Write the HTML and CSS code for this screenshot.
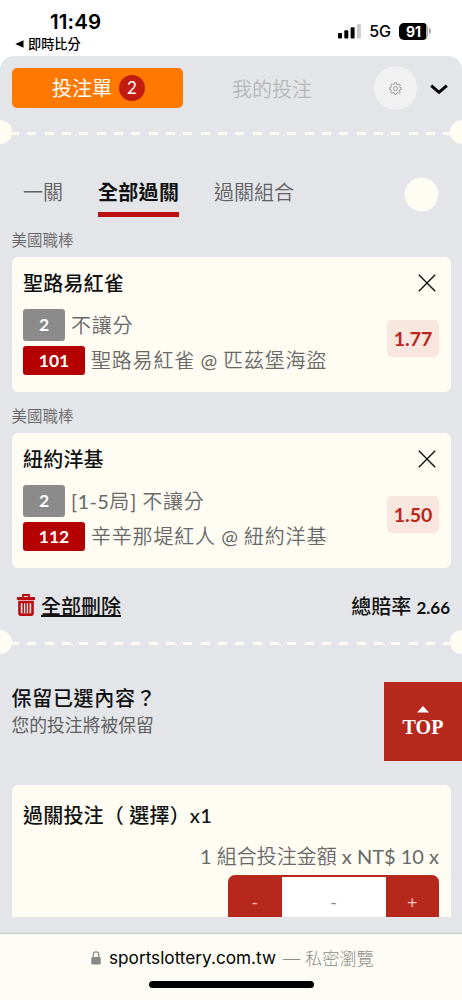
FILE: index.html
```html
<!DOCTYPE html>
<html lang="zh-Hant">
<head>
<meta charset="utf-8">
<meta name="viewport" content="width=device-width, initial-scale=1">
<title>投注單</title>
<link rel="stylesheet" href="styles.css">
</head>
<body>
<div class="phone">
  <header class="status">
    <div class="status-left">
      <div class="clock">11:49</div>
      <div class="back"><svg width="9" height="8" viewBox="0 0 9 8"><path d="M0.3 4 8.5 0.3V7.7Z" fill="#000"/></svg><span>即時比分</span></div>
    </div>
    <div class="status-right">
      <svg class="signal" width="23" height="15" viewBox="0 0 23 15"><rect x="0" y="9" width="4" height="5.5" rx="1"/><rect x="6.3" y="6.3" width="4" height="8.2" rx="1"/><rect x="12.6" y="3.3" width="4" height="11.2" rx="1"/><rect x="18.9" y="0" width="4" height="14.5" rx="1" fill="#ccc"/></svg>
      <span class="network">5G</span>
      <span class="battery">91</span><i class="battery-tip"></i>
    </div>
  </header>

  <main class="sheet">
    <nav class="topbar">
      <button class="slip">投注單<span class="count">2</span></button>
      <span class="mine">我的投注</span>
      <span class="gear"><svg width="13" height="13" viewBox="0 0 24 24" fill="none" stroke="#999" stroke-width="1.8" stroke-linejoin="round"><path d="M9.5 4.5 10 1.5h4l.5 3 2 .8L19 3.500 21 6l-1.800 2.500.8 1.500 2.500.5v3.500l-2.800.5-.8 2L20.500 19 18 21.200l-2.500-1.700-1.500.7-.5 2.500h-3.500l-.5-2.700-2-.8L5 21 2.800 18.500l1.700-2.500-.8-1.800-2.500-.5v-3.500l2.800-.5.8-2L3 5.200 5.500 3l2.200 2.200Z"/><circle cx="12" cy="12" r="3.700"/></svg></span>
      <svg class="chevron" width="18" height="11" viewBox="0 0 18 11"><path d="M1.200 1.600 9 8.300 16.800 1.600" fill="none" stroke="#000" stroke-width="3"/></svg>
    </nav>

    <div class="perforation"><i class="notch"></i><i class="dashes"></i><i class="notch"></i></div>

    <nav class="tabs">
      <span class="tab">一關</span>
      <span class="tab active">全部過關</span>
      <span class="tab">過關組合</span>
      <i class="info"></i>
    </nav>

    <h3 class="league">美國職棒</h3>
    <section class="card">
      <div class="card-head"><h2>聖路易紅雀</h2><svg class="close" width="18" height="18" viewBox="0 0 18 18"><path d="M.8.8 17.200 17.200M17.200.8.8 17.200" stroke="#111" stroke-width="1.400"/></svg></div>
      <div class="card-body">
        <div class="lines">
          <div class="line"><span class="tag grey">2</span><span class="detail">不讓分</span></div>
          <div class="line"><span class="tag red">101</span><span class="detail">聖路易紅雀<span class="latin"> @ </span>匹茲堡海盜</span></div>
        </div>
        <span class="odds">1.77</span>
      </div>
    </section>

    <h3 class="league">美國職棒</h3>
    <section class="card">
      <div class="card-head"><h2>紐約洋基</h2><svg class="close" width="18" height="18" viewBox="0 0 18 18"><path d="M.8.8 17.200 17.200M17.200.8.8 17.200" stroke="#111" stroke-width="1.400"/></svg></div>
      <div class="card-body">
        <div class="lines">
          <div class="line"><span class="tag grey">2</span><span class="detail"><span class="latin">[1-5</span>局<span class="latin">] </span>不讓分</span></div>
          <div class="line"><span class="tag red">112</span><span class="detail">辛辛那堤紅人<span class="latin"> @ </span>紐約洋基</span></div>
        </div>
        <span class="odds">1.50</span>
      </div>
    </section>

    <div class="summary">
      <svg width="18" height="22" viewBox="0 0 18 22" fill="none" stroke="#ba0b0e"><path d="M0 4.500H18" stroke-width="3"/><path d="M6 4V1H12V4" stroke-width="1.800"/><path d="M2.500 8V19.200Q2.500 20.600 3.900 20.600H14.100Q15.500 20.600 15.500 19.200V8Z" stroke-width="2.600"/><path d="M6.200 9V19M9 9V19M11.800 9V19" stroke-width="1.500"/></svg>
      <a class="clear">全部刪除</a>
      <span class="total">總賠率 <span class="total-value">2.66</span></span>
    </div>

    <div class="perforation"><i class="notch"></i><i class="dashes"></i><i class="notch"></i></div>

    <div class="keep">
      <h2>保留已選內容？</h2>
      <p>您的投注將被保留</p>
    </div>

    <section class="card stake">
      <h2>過關投注（ 選擇）x1</h2>
      <p class="amount"><span class="latin">1 </span>組合投注金額<span class="latin"> x NT$ 10 x</span></p>
      <div class="stepper"><span>-</span><span class="value">-</span><span>+</span></div>
    </section>
    <a class="top"><svg width="12" height="7" viewBox="0 0 12 7"><path d="M6 0 12 6.500H0Z" fill="#fff"/></svg>TOP</a>
  </main>

  <footer class="browser">
    <div class="address">
      <svg width="10" height="14" viewBox="0 0 10 14"><path d="M2.200 7V3.800a2.700 2.900 0 0 1 5.600 0V7" fill="none" stroke="#888" stroke-width="1.200"/><rect x=".3" y="6" width="9.400" height="7.600" rx="1.400" fill="#888"/></svg>
      <span class="host">sportslottery.com.tw</span>
      <span class="mode">— 私密瀏覽</span>
    </div>
    <i class="home"></i>
  </footer>
</div>
</body>
</html>
```

FILE: styles.css
```css
* { box-sizing: border-box; margin: 0; padding: 0; }
body { background: #fff; font-family: Lato, "Noto Sans CJK TC", sans-serif; }
h2, h3 { font-weight: 500; }
svg, i { display: block; flex: none; }
.phone { width: 462px; height: 1000px; overflow: hidden; display: flex; flex-direction: column; }

.status { height: 56px; flex: none; display: flex; justify-content: space-between; font-family: Inter, "Noto Sans CJK TC", sans-serif; }
.status-left { padding: 9px 0 0 15px; }
.clock { padding-left: 35px; font-size: 20.500px; line-height: 25px; font-weight: 600; letter-spacing: .1px; }
.back { display: flex; align-items: center; gap: 4px; font-size: 13.200px; line-height: 20px; font-weight: 500; }
.status-right { display: flex; align-items: center; height: 22px; margin: 20px 33px 0 0; }
.network { font-size: 16px; font-weight: 500; margin: 0 8px 0 8px; }
.battery { width: 29px; height: 17px; border-radius: 5px; background: linear-gradient(90deg, #000 92%, #aaa 92%); color: #fff; font-size: 14px; line-height: 17px; font-weight: 700; text-align: center; }
.battery-tip { width: 2px; height: 6px; margin-left: 1px; margin-right: -2px; border-radius: 0 2px 2px 0; background: #aaa; }

.sheet { position: relative; height: 878px; flex: none; overflow: hidden; background: #e4e5e8; border-radius: 14px 14px 0 0; border-bottom: 1px solid #c8c9ca; display: flex; flex-direction: column; }
.sheet > * { flex: none; }
.topbar { display: flex; align-items: center; height: 44px; margin-top: 10px; padding: 0 13.500px 0 11.500px; }
.slip { width: 171px; height: 40px; border: 0; border-radius: 5px; background: #ff7900; color: #fff; font: 400 20px/40px Lato, "Noto Sans CJK TC", sans-serif; display: flex; align-items: center; justify-content: center; gap: 7px; padding-left: 3px; }
.count { width: 26px; height: 26px; border-radius: 50%; background: #c21b12; font-size: 17px; line-height: 26px; text-align: center; }
.mine { margin-left: 49.500px; width: 141.500px; font-size: 20px; font-weight: 350; color: #b5b6b8; }
.gear { width: 43.500px; height: 43.500px; border-radius: 50%; background: #f1f1f1; display: flex; align-items: center; justify-content: center; }
.chevron { margin: 2px 0 0 13px; }

.perforation { height: 24px; display: flex; align-items: center; justify-content: space-between; margin: 10px -12px 0; }
.notch { width: 24px; height: 24px; border-radius: 50%; background: #fffdf3; }
.dashes { flex: 1; height: 3px; margin-top: 2px; background: repeating-linear-gradient(90deg, #fffdf3 0 7px, transparent 7px 15.300px, #fffdf3 15.300px 17.330px); }

.tabs { display: flex; height: 73px; margin-top: 32px; padding-left: 23px; padding-right: 23px; font-size: 20px; line-height: 33px; font-weight: 350; color: #606163; }
.tab { height: 41px; margin-right: 35px; }
.tab.active { font-weight: 700; color: #111; border-bottom: 5px solid #bd1014; width: 81px; letter-spacing: .3px; white-space: nowrap; }
.info { width: 35px; height: 35px; margin-left: auto; margin-top: 1px; border-radius: 50%; background: #fffdf3; border: 1px solid #efeff0; }

.league { height: 26px; margin: -18px 0 0 11.500px; font-size: 15.500px; line-height: 18px; font-weight: 350; color: #66676a; }
.card + .league { margin-top: 15px; }
.card { width: 439px; height: 135px; margin-left: 11.500px; padding: 11px 11.500px; border-radius: 6px; background: #fffdf3; }
.card h2, .keep h2 { font-size: 20px; line-height: 30px; letter-spacing: .2px; color: #111; }
.card-head { display: flex; justify-content: space-between; padding-right: 3.500px; }
.close { margin-top: 6px; }
.card-body { display: flex; justify-content: space-between; align-items: flex-start; margin-top: 11px; }
.lines { display: flex; flex-direction: column; gap: 5px; }
.line { display: flex; align-items: center; gap: 6px; font-size: 20px; line-height: 29px; font-weight: 350; color: #686868; }
.detail { letter-spacing: .8px; white-space: pre; }
.latin { font-weight: 400; letter-spacing: 0; }
.detail .latin { letter-spacing: .4px; }
.tag { border-radius: 3px; color: #fff; font-size: 17.500px; font-weight: 700; text-align: center; }
.grey { width: 42px; height: 32px; line-height: 32px; background: #8b8b8b; }
.red { width: 62px; height: 29px; line-height: 29px; background: #b50000; }
.odds { width: 52px; height: 37px; margin-top: 11px; border-radius: 5px; background: #f8e6df; color: #b9281b; font-size: 19.500px; line-height: 37px; font-weight: 700; text-align: center; }

.summary { height: 40px; margin-top: 17px; padding: 0 12px 0 17px; display: flex; align-items: center; font-size: 20px; font-weight: 500; color: #111; }
.clear { margin-left: 6px; text-decoration: underline; text-decoration-thickness: 2px; text-underline-offset: 1px; }
.total { margin-left: auto; }
.total-value { font-size: 17px; font-weight: 700; }
.summary + .perforation { margin-top: 5px; }

.keep { height: 131px; padding: 29px 11.500px 0; }
.keep h2 { letter-spacing: .7px; }
.keep p { font-size: 17.800px; line-height: 24px; color: #5e5f61; }
.stake { height: 132px; overflow: hidden; border-radius: 6px 6px 0 0; padding-top: 15px; }
.amount { margin-top: 12px; text-align: right; font-size: 20px; line-height: 29px; font-weight: 350; color: #686868; white-space: nowrap; }
.stepper { width: 211px; height: 60px; margin: 4px 0 0 auto; border-radius: 7px; border: 2px solid #b6271c; border-width: 2px 0; background: #b6271c; color: #f1c2b9; display: flex; overflow: hidden; font-size: 18px; line-height: 50px; text-align: center; }
.stepper span { flex: 1; }
.stepper .value { flex: 0 0 104px; background: #fff; color: #888; }
.top { position: absolute; right: 0; top: 626px; width: 78px; height: 79px; background: #b6271c; color: #fff; font: 700 20px/28px "Liberation Serif", serif; display: flex; flex-direction: column; align-items: center; padding-top: 24px; }

.browser { height: 66px; background: #fefdf5; font-family: Inter, "Noto Sans CJK TC", sans-serif; }
.address { display: flex; align-items: center; height: 47px; padding-left: 91px; font-size: 17.200px; font-weight: 400; }
.host { margin-left: 8px; }
.mode { margin-left: 7px; color: #8c8c88; font-weight: 300; }
.home { width: 165px; height: 7px; margin-left: 149px; border-radius: 4px; background: #000; }
```
